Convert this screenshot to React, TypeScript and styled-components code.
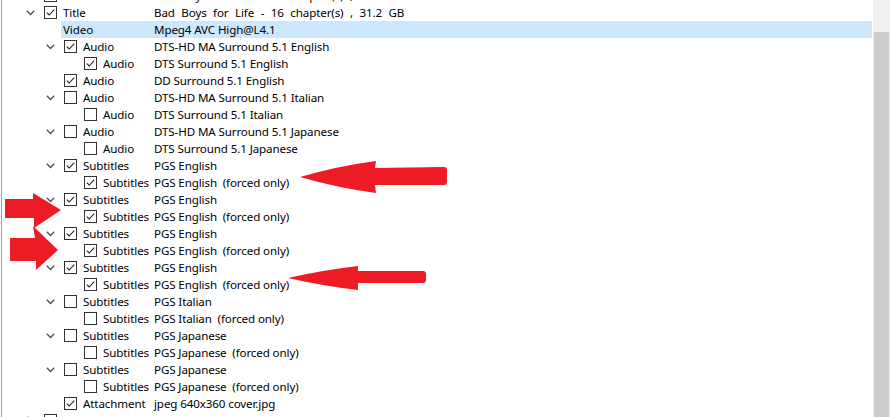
import styled, { createGlobalStyle } from "styled-components";

const GlobalStyle = createGlobalStyle`
  html, body {
    margin: 0;
    padding: 0;
    background: #ffffff;
  }
  body {
    font-family: "Noto Sans", "Open Sans", sans-serif;
    font-size: 11.6px;
    letter-spacing: -0.12px;
    color: #000000;
  }
`;

const ROW_H = 17;
const VALUE_X = 154;

const Page = styled.div`
  position: relative;
  width: 890px;
  height: 417px;
  display: flex;
  overflow: hidden;
  background: #ffffff;
`;

const Tree = styled.div`
  flex: 1;
  margin-left: 1px;
  border-left: 1px solid #a0a0a0;
  overflow: hidden;
`;

const List = styled.ul`
  list-style: none;
  margin: -13px 0 0 0;
  padding: 0 1px 0 0;
`;

const Row = styled.li<{ $level: number }>`
  display: flex;
  align-items: center;
  height: ${ROW_H}px;
  padding-left: ${(p) => 20 + p.$level * 20}px;
`;

const Expander = styled.span`
  flex: none;
  width: 16px;
  height: ${ROW_H}px;
  display: flex;
  align-items: center;
  justify-content: center;
`;

const Box = styled.span`
  flex: none;
  width: 11px;
  height: 11px;
  margin-left: 6px;
  border: 1px solid #333333;
  background: #ffffff;
  display: flex;
  align-items: center;
  justify-content: center;
`;

const Content = styled.div<{ $selected?: boolean; $hasBox: boolean }>`
  flex: 1;
  display: flex;
  align-items: center;
  height: ${ROW_H}px;
  margin-left: ${(p) => (p.$hasBox ? 4 : 3)}px;
  padding-left: 2px;
  background: ${(p) => (p.$selected ? "#cce8ff" : "transparent")};
  white-space: nowrap;
  line-height: ${ROW_H}px;
`;

const Label = styled.span<{ $width: number }>`
  flex: none;
  width: ${(p) => p.$width}px;
  overflow: hidden;
`;

const Value = styled.span<{ $wide?: boolean }>`
  flex: 1;
  word-spacing: ${(p) => (p.$wide ? "3.6px" : "normal")};
`;

const ScrollBar = styled.div`
  flex: none;
  width: 17px;
  height: 100%;
  background: #f0f0f0;
  display: flex;
  flex-direction: column;
`;

const Thumb = styled.div`
  margin: 32px 1px 0 1px;
  flex: 1;
  background: #cdcdcd;
`;

const Overlay = styled.svg`
  position: absolute;
  left: 0;
  top: 0;
  pointer-events: none;
`;

type Item = {
  level: number;
  label: string;
  value: string;
  check: boolean | null;
  expander?: "down" | "right";
  selected?: boolean;
};

const sub = (lang: string, on: boolean): Item[] => [
  { level: 1, label: "Subtitles", value: `PGS ${lang}`, check: on, expander: "down" },
  { level: 2, label: "Subtitles", value: `PGS ${lang}\u00a0\u00a0(forced only)`, check: on },
];

const titleText = "Bad Boys for Life - 16 chapter(s) , 31.2 GB";

const items: Item[] = [
  { level: 0, label: "Title", value: titleText, check: true, expander: "down" },
  { level: 0, label: "Title", value: titleText, check: true, expander: "down" },
  { level: 1, label: "Video", value: "Mpeg4 AVC High@L4.1", check: null, selected: true },
  { level: 1, label: "Audio", value: "DTS-HD MA Surround 5.1 English", check: true, expander: "down" },
  { level: 2, label: "Audio", value: "DTS Surround 5.1 English", check: true },
  { level: 1, label: "Audio", value: "DD Surround 5.1 English", check: true },
  { level: 1, label: "Audio", value: "DTS-HD MA Surround 5.1 Italian", check: false, expander: "down" },
  { level: 2, label: "Audio", value: "DTS Surround 5.1 Italian", check: false },
  { level: 1, label: "Audio", value: "DTS-HD MA Surround 5.1 Japanese", check: false, expander: "down" },
  { level: 2, label: "Audio", value: "DTS Surround 5.1 Japanese", check: false },
  ...sub("English", true),
  ...sub("English", true),
  ...sub("English", true),
  ...sub("English", true),
  ...sub("Italian", false),
  ...sub("Japanese", false),
  ...sub("Japanese", false),
  { level: 1, label: "Attachment", value: "jpeg 640x360 cover.jpg", check: true },
  { level: 0, label: "Title", value: "Bad Boys for Life - 20 chapter(s) , 30.4 GB", check: false, expander: "right" },
];

const Chevron = ({ dir }: { dir: "down" | "right" }) =>
  dir === "down" ? (
    <svg width="9" height="6" viewBox="0 0 9 6">
      <polyline points="0.8,0.8 4.5,4.5 8.2,0.8" fill="none" stroke="#4d4d4d" strokeWidth="1.3" />
    </svg>
  ) : (
    <svg width="6" height="9" viewBox="0 0 6 9">
      <polyline points="0.8,0.8 4.5,4.5 0.8,8.2" fill="none" stroke="#4d4d4d" strokeWidth="1.3" />
    </svg>
  );

const Tick = () => (
  <svg width="11" height="11" viewBox="0 0 11 11">
    <polyline points="1.8,5.6 4.2,8 9.2,2.6" fill="none" stroke="#222222" strokeWidth="1.1" />
  </svg>
);

const TreeRow = ({ item }: { item: Item }) => {
  const hasBox = item.check !== null;
  // page x where the content (and the selection band) begins
  const start = 2 + 20 + item.level * 20 + 16 + (hasBox ? 6 + 13 + 4 : 3);
  return (
    <Row $level={item.level}>
      <Expander>{item.expander && <Chevron dir={item.expander} />}</Expander>
      {hasBox && <Box>{item.check && <Tick />}</Box>}
      <Content $selected={item.selected} $hasBox={hasBox}>
        <Label $width={VALUE_X - start - 2}>{item.label}</Label>
        <Value $wide={item.level === 0}>{item.value}</Value>
      </Content>
    </Row>
  );
};

const RED = "#ed1c24";

const Arrows = () => (
  <Overlay width="890" height="417" viewBox="0 0 890 417">
    <path
      d="M300,177 Q338,166 376,161 L375,168 L444,167 Q447,167 447,170 L447,182 Q447,185 444,185 L375,185 L376,193 Q338,188 300,177 Z"
      fill={RED}
    />
    <path
      d="M288,278 Q323,270 358,266 L358,271 L423,271 Q426,271 426,274 L426,280 Q426,283 423,283 L358,283 L358,290 Q323,286 288,278 Z"
      fill={RED}
    />
    <path d="M5,199 L33,199 L33,193 L61,210 L34,228 L34,218 L5,218 Z" fill={RED} />
    <path d="M10,238 L35,238 L33,226 L58,250 L36,270 L36,261 L10,261 Z" fill={RED} />
  </Overlay>
);

const App = () => {
  return (
    <Page>
      <GlobalStyle />
      <Tree>
        <List>
          {items.map((item, i) => (
            <TreeRow key={i} item={item} />
          ))}
        </List>
      </Tree>
      <ScrollBar>
        <Thumb />
      </ScrollBar>
      <Arrows />
    </Page>
  );
};

export default App;
